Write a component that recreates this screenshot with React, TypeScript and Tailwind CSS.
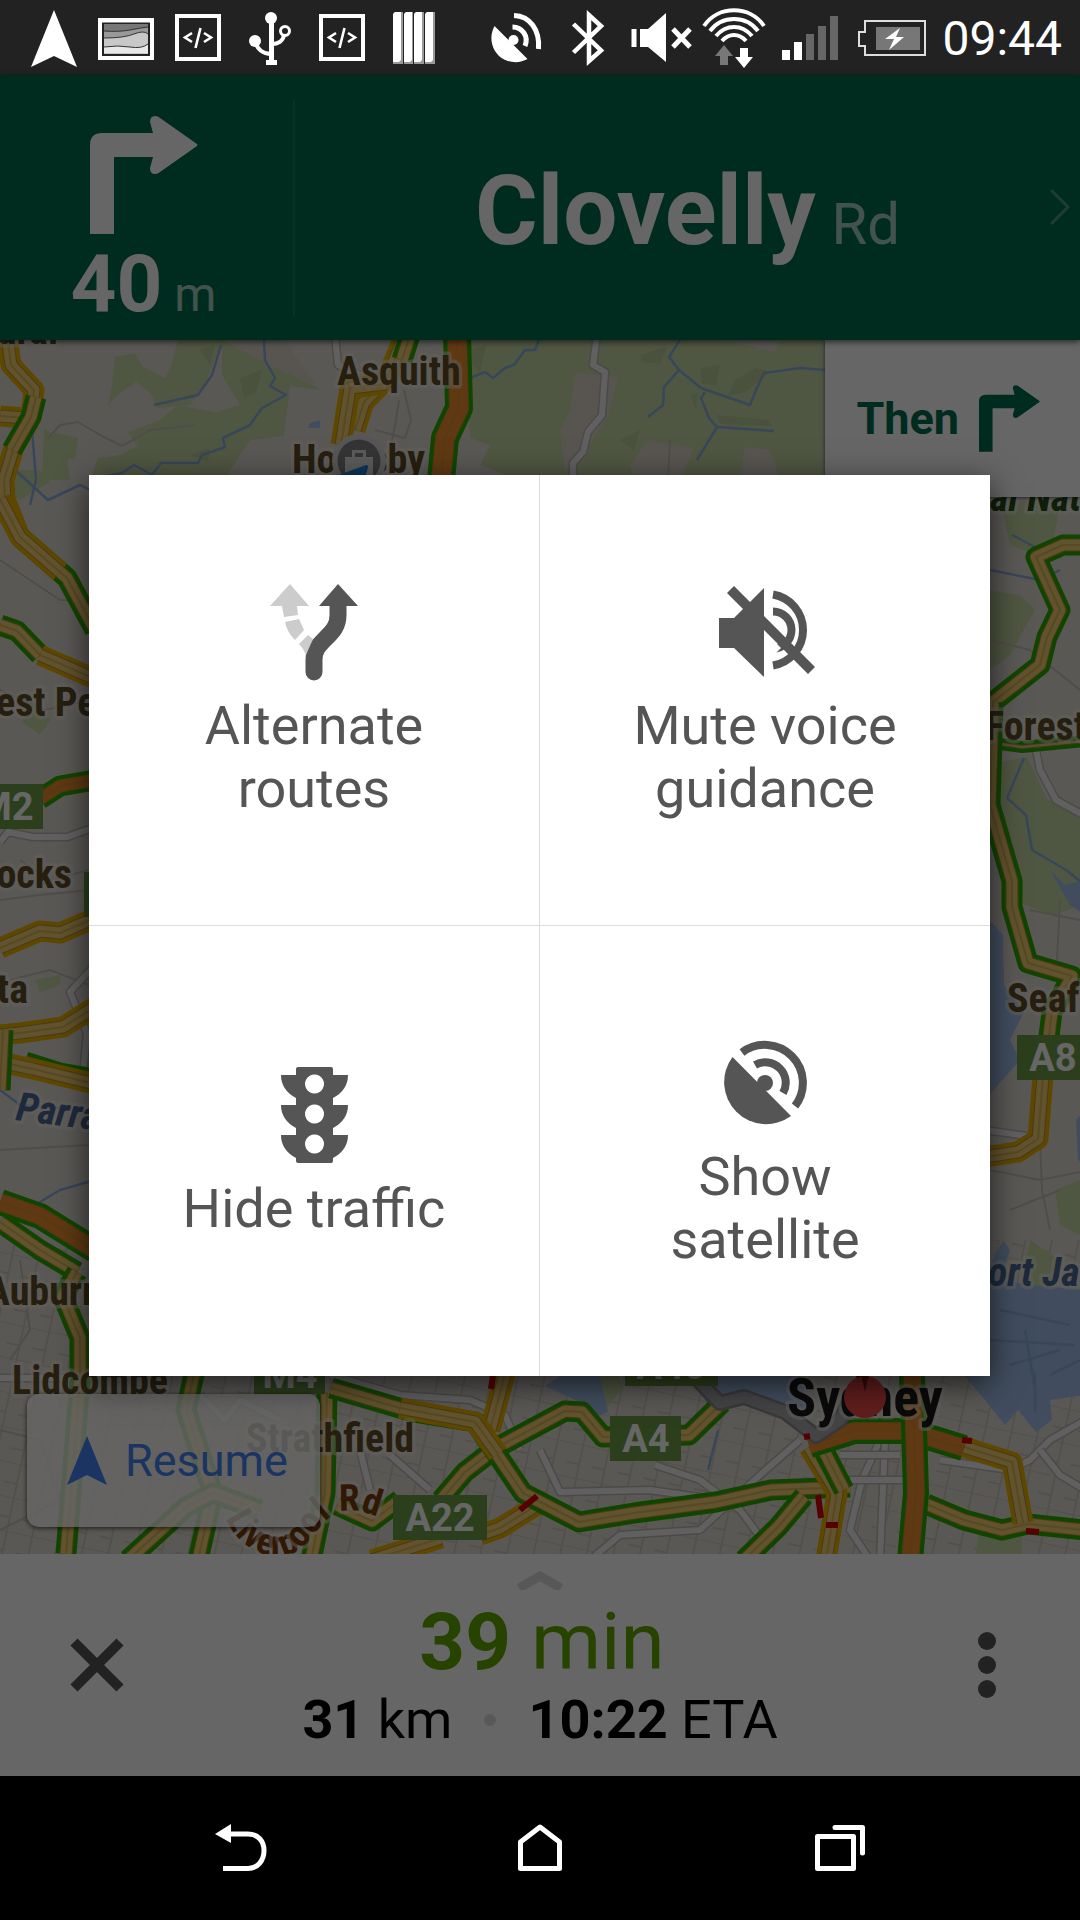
import type { ReactNode } from "react";

interface Road {
  points: string;
  traffic: string;
  core: string;
  width?: number;
}

const GREEN = "#2aac00";
const AMBER = "#ecb400";
const YELLOW = "#f2cf70";
const ORANGE = "#f08f2e";

const roads: Road[] = [
  { points: "7,335 11,365 34,390 31,417 14,447 4,480 5,499 20,537", traffic: AMBER, core: YELLOW },
  { points: "0,416 24,418", traffic: AMBER, core: YELLOW },
  { points: "36,397 31,417 12,450", traffic: GREEN, core: YELLOW },
  { points: "20,537 67,578 95,630", traffic: GREEN, core: YELLOW },
  { points: "0,499 20,537 60,572", traffic: AMBER, core: YELLOW },
  { points: "0,625 17,631 40,655", traffic: GREEN, core: YELLOW },
  { points: "40,655 95,679", traffic: AMBER, core: YELLOW },
  { points: "40,799 60,786 95,780", traffic: GREEN, core: ORANGE },
  { points: "0,948 40,931 60,933 95,918", traffic: AMBER, core: YELLOW },
  { points: "0,1035 20,1033 63,1027 95,1007", traffic: AMBER, core: YELLOW },
  { points: "25,1062 60,1073 95,1079", traffic: GREEN, core: YELLOW },
  { points: "0,1062 33,1069 95,1084", traffic: AMBER, core: YELLOW },
  { points: "0,1090 3,1030", traffic: GREEN, core: YELLOW },
  { points: "0,1222 40,1250 77,1272", traffic: GREEN, core: YELLOW },
  { points: "0,1202 40,1216 95,1250", traffic: GREEN, core: ORANGE, width: 26 },
  { points: "77,1272 63,1297 80,1338 80,1380 66,1554", traffic: GREEN, core: YELLOW },
  { points: "405,335 386,380 364,402 355,430", traffic: AMBER, core: YELLOW },
  { points: "410,335 402,360", traffic: GREEN, core: YELLOW },
  { points: "386,384 350,388 341,445", traffic: AMBER, core: YELLOW },
  { points: "457,335 459,408 445,438 441,480", traffic: GREEN, core: ORANGE, width: 28 },
  { points: "1085,545 1063,545 1036,557 1060,610 1047,637 1040,665 993,702", traffic: GREEN, core: YELLOW },
  { points: "993,743 1022,747 1085,741", traffic: GREEN, core: "#f4e6b8", width: 12 },
  { points: "993,702 990,805 1012,881 1012,907 1028,963 1072,976 1052,1012 1045,1068", traffic: GREEN, core: YELLOW },
  { points: "1044,1064 1038,1139 1018,1152 985,1157", traffic: AMBER, core: YELLOW },
  { points: "195,1370 186,1410 213,1493 198,1560", traffic: GREEN, core: YELLOW },
  { points: "128,1560 186,1507 213,1493 260,1510", traffic: GREEN, core: YELLOW },
  { points: "327,1392 325,1493 311,1560", traffic: GREEN, core: YELLOW },
  { points: "372,1560 441,1538", traffic: AMBER, core: YELLOW },
  { points: "337,1505 372,1521 400,1500", traffic: GREEN, core: YELLOW },
  { points: "506,1370 490,1430", traffic: AMBER, core: YELLOW },
  { points: "480,1535 500,1528 537,1505", traffic: AMBER, core: YELLOW },
  { points: "441,1500 465,1472 496,1448 565,1411 582,1412 603,1437 689,1435 722,1403", traffic: GREEN, core: YELLOW },
  { points: "331,1388 413,1412 475,1422 492,1447 523,1493 579,1522 634,1513 716,1502 771,1490 850,1487", traffic: GREEN, core: YELLOW },
  { points: "400,1408 475,1422 498,1454", traffic: AMBER, core: YELLOW },
  { points: "809,1447 837,1493 826,1560", traffic: AMBER, core: YELLOW },
  { points: "822,1447 844,1490", traffic: GREEN, core: YELLOW },
  { points: "804,1496 778,1527 744,1560", traffic: GREEN, core: YELLOW },
  { points: "926,1504 964,1520 1002,1530 1028,1524 1085,1530", traffic: GREEN, core: YELLOW },
  { points: "964,1447 1012,1462 1023,1523", traffic: AMBER, core: YELLOW },
  { points: "809,1445 854,1431 909,1431 964,1448", traffic: GREEN, core: ORANGE, width: 26 },
  { points: "912,1375 914,1427 916,1493 910,1560", traffic: GREEN, core: ORANGE, width: 26 },
];

const whiteRoads = [
  "597,335 593,365 605,372 602,415 588,432 583,452 573,463 573,480",
  "335,335 338,365 360,375",
  "0,842 8,832 33,837 67,837 95,827",
  "95,965 70,992 87,1033 83,1075",
  "1036,750 1040,770 1056,800 1085,816",
  "330,1375 400,1395 470,1400 505,1415 520,1450",
  "540,1450 560,1492 650,1490 720,1500",
  "655,1465 700,1480 740,1510 770,1550",
  "800,1440 760,1475 700,1530 620,1535 590,1560",
  "880,1440 862,1480 850,1530 870,1560",
  "885,1440 880,1560",
  "840,1455 900,1455",
  "850,1480 920,1480",
  "1085,1420 1050,1440 1030,1460 1010,1470 940,1460",
  "1040,1450 1060,1475 1085,1490",
  "200,1395 225,1420 240,1400 280,1420",
  "360,1450 370,1490",
  "390,1455 430,1490",
  "985,1130 1040,1138",
  "0,1378 90,1378",
];

const parks = [
  "115,357 135,353 143,367 165,378 171,366 178,340 222,340 205,385 190,405 158,408 150,393 136,382 118,395 108,405 112,385",
  "178,405 215,412 228,421 200,438 180,452 140,450 128,432 160,420",
  "222,340 270,340 320,390 290,386 284,436 250,440 240,455 225,480 90,480 98,458 120,455 150,440 190,420 240,405 222,375",
  "53,432 78,438 75,460 50,455",
  "462,340 825,340 825,480 520,480 480,465 490,445 470,438 468,400",
  "0,470 40,470 50,482 20,500 0,490",
  "44,428 66,445 70,480 42,480",
  "990,590 1020,595 1035,610 1010,655 990,670",
  "1000,500 1060,505 1050,560 1010,545",
  "995,763 1027,757 1047,799 1085,816 1085,904 1053,915 1023,904 995,845",
  "500,1455 520,1460 510,1480 495,1475",
  "610,1365 625,1385 605,1410 600,1375",
  "980,1525 1022,1525 1022,1560 975,1560",
  "1055,1190 1080,1180 1080,1235 1060,1225",
  "1030,1240 1060,1260 1040,1310 1020,1290",
  "30,700 50,720 40,735 22,722",
  "35,980 60,975 60,985 40,992",
];

const woods = [
  "470,350 486,345 480,372 470,362",
  "640,355 668,346 660,364 642,362",
  "700,368 720,365 716,385 702,384",
  "735,380 756,368 770,372 746,392 728,396",
  "716,415 768,420 772,426 720,424",
  "690,395 698,393 696,410",
  "620,440 640,430 634,450",
  "240,378 262,370 256,392 244,398",
  "200,350 215,345 210,365",
  "190,455 210,448 208,462",
];

const clearings = [
  "575,373 618,377 608,415 590,445 565,470 560,430 570,410",
  "648,440 694,448 680,480 635,480 630,465",
  "745,447 770,450 780,480 740,480",
  "222,340 285,340 318,388 270,365",
  "720,340 780,340 775,352 745,345",
];

const water = [
  "985,915 1003,935 1004,985 1024,1012 1010,1040 1020,1060 985,1100",
  "985,1275 1003,1240 1010,1250 1000,1280 1030,1285 1085,1290 1085,1395 1050,1400 1052,1420 1036,1432 1018,1410 1005,1425 985,1400 960,1370 985,1370",
  "560,1376 600,1376 608,1412 588,1420 575,1400 545,1386",
  "650,1376 800,1376 810,1410 770,1400 730,1395 712,1425 700,1380",
  "1050,870 1065,885 1085,880 1085,915 1070,905",
  "1076,1120 1085,1110 1085,1165 1078,1160",
  "310,423 320,420 320,428 308,428",
];

const creeks = [
  "221,345 212,375 198,395 154,405",
  "264,340 265,360 275,378 270,386 286,395 262,408 250,425 223,438 225,447 202,455 198,463 161,463 152,475 134,465 122,473 95,478",
  "539,340 535,350 525,350 514,365 505,368 493,378 485,372 470,378",
  "680,340 669,357 679,370 701,388 750,405 756,390 764,373 800,368 825,370",
  "679,370 664,387 663,405 648,417",
  "705,392 701,398 709,418 717,427 697,460",
  "717,427 774,431",
  "15,470 48,500 80,485 90,490",
  "32,430 36,480 30,505",
  "1012,535 1037,548",
  "990,570 1040,580 1060,570",
  "1024,758 1007,798 1026,815 1032,850 1066,870 1085,885",
  "95,1180 60,1190 35,1205",
  "0,1090 20,1105 60,1108 95,1112",
  "718,1430 708,1470",
];

const lanes = [
  "48,438 60,425 78,422 100,435 122,446 150,430 170,428 195,425",
  "399,400 396,420 392,440 390,475",
  "404,390 411,420 405,438 375,430",
  "670,440 668,480",
  "0,560 30,580 60,600 89,600",
  "0,690 45,710 89,700",
  "20,860 50,880 89,870",
  "0,900 40,895 89,890",
  "10,980 50,970 89,985",
  "0,1150 89,1145",
  "20,1260 30,1330 10,1360",
  "990,640 1030,650 1080,690",
  "1030,910 1080,920",
  "1060,900 1057,960",
  "990,1170 1040,1180 1080,1172",
  "1010,1210 1060,1190",
  "1040,1140 1042,1190 1050,1230",
  "0,1430 40,1440 60,1500 0,1530",
];

const jams = [
  "520,1510 537,1496",
  "818,1495 821,1518",
  "826,1525 838,1525",
  "962,1440 972,1441",
  "1026,1531 1039,1532",
  "493,1376 491,1389",
  "804,1437 810,1436",
];

function MapDrawing() {
  return (
    <svg
      className="absolute inset-0 size-full"
      viewBox="0 340 1080 1214"
      preserveAspectRatio="xMidYMid slice"
      fill="none"
      strokeLinejoin="round"
      aria-hidden="true"
    >
      <defs>
        <pattern id="streets" width="26" height="34" patternUnits="userSpaceOnUse" patternTransform="rotate(12)">
          <path d="M0 0H26M13 0V34M0 20H13" stroke="#cfc9bf" strokeWidth="2" />
        </pattern>
        <path id="liverpool-road" d="M226 1518C242 1558 286 1566 306 1544S334 1492 396 1526" />
      </defs>
      <rect y="340" width="1080" height="1214" fill="#e2dcd4" />
      <rect y="1240" width="1080" height="314" fill="url(#streets)" />
      {parks.map((points) => (
        <polygon key={points} points={points} fill="#c6d7a4" />
      ))}
      {woods.map((points) => (
        <polygon key={points} points={points} fill="#b9ca96" />
      ))}
      {clearings.map((points) => (
        <polygon key={points} points={points} fill="#dcd5cb" />
      ))}
      {water.map((points) => (
        <polygon key={points} points={points} fill="#a3c0ec" />
      ))}
      <g stroke="#8db0e0" strokeWidth="2.5">
        {creeks.map((points) => (
          <polyline key={points} points={points} />
        ))}
        <path d="M1000 1310L1070 1325M990 1340L1075 1345M1010 1365L1060 1350M1025 1330L1035 1390M1050 1375L1080 1360M1035 1372V1412" />
      </g>
      <g stroke="#c6c0b6" strokeWidth="2">
        {lanes.map((points) => (
          <polyline key={points} points={points} />
        ))}
      </g>
      {whiteRoads.map((points) => (
        <g key={points}>
          <polyline points={points} stroke="#bdb8b0" strokeWidth="9" />
          <polyline points={points} stroke="#f0f0f0" strokeWidth="6" />
        </g>
      ))}
      {roads.map(({ points, traffic, core, width = 21 }) => (
        <g key={points}>
          <polyline points={points} stroke={traffic} strokeWidth={width} />
          <polyline points={points} stroke="#b98f3c" strokeWidth={width - 8} />
          <polyline points={points} stroke={core} strokeWidth={width - 10} />
          <polyline points={points} stroke="#b98f3c" strokeOpacity="0.4" strokeWidth="2" />
        </g>
      ))}
      <polyline points="690,1372 720,1403 744,1397 785,1412 816,1436 840,1420 850,1400" stroke="#8c8c90" strokeWidth="16" />
      <polyline points="690,1372 720,1403 744,1397 785,1412 816,1436 840,1420 850,1400" stroke="#aaaaae" strokeWidth="11" />
      {jams.map((points) => (
        <polyline key={points} points={points} stroke="#d8000c" strokeWidth="6" />
      ))}

      <g fill="#6f9e46">
        <rect x="-10" y="784" width="53" height="45" />
        <rect x="84" y="872" width="20" height="45" />
        <rect x="1017" y="1035" width="80" height="45" />
        <rect x="254" y="1350" width="71" height="44" />
        <rect x="625" y="1342" width="93" height="44" />
        <rect x="610" y="1416" width="71" height="45" />
        <rect x="393" y="1495" width="94" height="45" />
      </g>
      <g fill="#fff" textAnchor="middle" className="font-['Roboto'] text-[38px] font-bold">
        <text x="6" y="820">M2</text>
        <text x="1053" y="1071">A8</text>
        <text x="290" y="1388">M4</text>
        <text x="671" y="1379">A40</text>
        <text x="646" y="1452">A4</text>
        <text x="440" y="1531">A22</text>
      </g>
      <g
        fill="#5f4f2a"
        stroke="#f2efe9"
        strokeOpacity="0.5"
        strokeWidth="7"
        paintOrder="stroke"
        className="font-['Roboto_Condensed','Liberation_Sans_Narrow','Roboto',sans-serif] text-[40px] font-bold"
      >
        <text x="58" y="344" textAnchor="end">Dural</text>
        <text x="337" y="385">Asquith</text>
        <text x="292" y="473">Hornsby</text>
        <text x="-4" y="716">est Pennant</text>
        <text x="72" y="888" textAnchor="end">The Rocks</text>
        <text x="28" y="1003" textAnchor="end">Parramatta</text>
        <text x="-14" y="1305">Auburn</text>
        <text x="12" y="1394">Lidcombe</text>
        <text x="246" y="1452">Strathfield</text>
        <text x="985" y="740">Forestville</text>
        <text x="1007" y="1012">Seaforth</text>
        <text className="text-[37px]" fill="#7a3c0c">
          <textPath href="#liverpool-road">Liverpool Rd</textPath>
        </text>
        <text x="787" y="1416" fill="#1a1a1a" className="text-[54px]">Sydney</text>
        <g className="italic">
          <text x="990" y="511" fill="#24501a">al National</text>
          <text x="988" y="1286" fill="#4b6996">ort Jackson</text>
          <text x="15" y="1120" fill="#4b6996" transform="rotate(7 15 1120)">Parramatta</text>
        </g>
      </g>

      <circle cx="359" cy="461" r="27" fill="#d8d8d8" />
      <circle cx="359" cy="461" r="21.5" fill="#828282" />
      <path d="M345 457h7v-7h14v7h7v20h-28zM355 457h8v-4h-8z" fill="#e4e4e4" fillRule="evenodd" />
      <path d="M336 476L366 465Q369 465 368 468L364 480Z" fill="#1e88e5" />
      <circle cx="865" cy="1397" r="21" fill="#f04c46" />
      <path d="M861 1374h8l-4 18z" fill="#8a1c18" />
    </svg>
  );
}

function StatusIcon({ children }: { children: ReactNode }) {
  return (
    <svg className="h-[75px] w-[72px] shrink-0" viewBox="0 0 72 75" fill="none" stroke="none" aria-hidden="true">
      {children}
    </svg>
  );
}

function DevIcon() {
  return (
    <StatusIcon>
      <rect x="15" y="16" width="42" height="43" stroke="#fff" strokeWidth="4" />
      <path d="M30 33L23 37.5L30 42M42 33L49 37.5L42 42M38.5 28L33.5 48" stroke="#fff" strokeWidth="2.6" />
    </StatusIcon>
  );
}

function StatusBar() {
  return (
    <div className="flex h-[75px] items-center bg-[#222222] px-[18px] text-white">
      <StatusIcon>
        <path d="M36 10L59 67L36 56L13 67Z" fill="#fff" />
      </StatusIcon>
      <StatusIcon>
        <path d="M8 18H64V60H8ZM12 22.500V56H60V22.500Z" fill="#fff" fillRule="evenodd" />
        <path d="M14 24H58V54H14Z" fill="#777" />
        <path d="M14 31Q30 32 40 30T58 27V54H14Z" fill="#999" />
        <path d="M14 38Q34 38 44 34T58 34V54H14Z" fill="#c8c8c8" />
        <path d="M14 47Q28 45 40 47T58 44V53H14Z" fill="#e8e8e8" />
        <path d="M14 31Q30 32 40 30T58 27M14 38Q34 38 44 34T58 34M14 47Q28 45 40 47T58 44" stroke="#333" strokeWidth="1" />
      </StatusIcon>
      <DevIcon />
      <StatusIcon>
        <circle cx="37" cy="18" r="6" fill="#fff" />
        <circle cx="21" cy="41" r="6" fill="#fff" />
        <circle cx="51" cy="31" r="4.500" stroke="#fff" strokeWidth="3" />
        <path d="M37 18V64M22 43C23 49 29 54 37 54M50 35C49 41 44 44 38 44" stroke="#fff" strokeWidth="4" />
        <path d="M35 18h5v42h3v5H32v-5h3z" fill="#fff" />
      </StatusIcon>
      <DevIcon />
      <StatusIcon>
        <path d="M15 14L17 12H25V64H15Z M26 14L28 12H35V64H26Z M36 14L38 12H46V64H36Z M47 14L49 12H57V64H47Z" fill="#999" />
        <path d="M15 14L17 12H23V60L21 62H15Z M26 14L28 12H34V60L32 62H26Z M36 14L38 12H44V60L42 62H36Z M47 14L49 12H55V60L53 62H47Z" fill="#fff" />
      </StatusIcon>

      <div className="ml-auto flex items-center">
        <StatusIcon>
          <path d="M14.500 26L47.500 59C39 64 27 63 19 56C11 48 9 36 14.500 26Z" fill="#fff" />
          <circle cx="33.500" cy="40" r="5" fill="#fff" />
          <path d="M34 15.500C50 16 60 30 58.500 49M32.500 27C42 27 49 36 45 46" stroke="#fff" strokeWidth="5" />
        </StatusIcon>
        <StatusIcon>
          <path d="M21.500 24L49 50.500L37 61V15L49 26L21.500 52.500" stroke="#fff" strokeWidth="4.500" />
        </StatusIcon>
        <StatusIcon>
          <path d="M7.500 29h5v18h-5zM16 29h8L42 13v49L24 47h-8z" fill="#fff" />
          <path d="M49 29L66 47M66 29L49 47" stroke="#fff" strokeWidth="5" />
        </StatusIcon>
        <StatusIcon>
          <g stroke="#fff" strokeWidth="4">
            <path d="M8 26C22 5 54 5 68 26M14 31C26 15 50 15 62 31M20 36C30 24 46 24 56 36M26 41C33 33 43 33 50 41" />
          </g>
          <path d="M28 45L37 56H32V65H24V56H19Z" fill="#777" />
          <path d="M44 48H52V57H57L48 68L39 57H44Z" fill="#fff" />
        </StatusIcon>
        <svg className="ml-[14px] h-11 w-14" viewBox="0 0 56 44" aria-hidden="true">
          <path d="M0 34h8v10H0zM12 26h8v18h-8z" fill="#fff" />
          <path d="M24 18h8v26h-8zM36 10h8v34h-8zM48 0h8v44h-8z" fill="#666" />
        </svg>
        <svg className="ml-5 h-9 w-[68px]" viewBox="0 0 68 36" fill="none" aria-hidden="true">
          <path d="M7 1H67V35H7V26H1V12H7Z" stroke="#ddd" strokeWidth="2" />
          <path d="M18 7H62V30H18Z" fill="#777" />
          <path d="M42 8L27 19H36L31 30L46 17H38Z" fill="#fff" />
        </svg>
        <span className="ml-4 pt-0.5 text-5xl leading-none">09:44</span>
      </div>
    </div>
  );
}

function TurnRightArrow({ className }: { className: string }) {
  return (
    <svg className={className} viewBox="0 0 108 118" fill="currentColor" aria-hidden="true">
      <path d="M0 118V29Q0 17 12 17H63L60 6Q60 0 65 0Q68 0 70 2L107 28Q108 29 107 30L70 56Q68 58 65 58Q60 58 60 52L63 41H24V118Z" />
    </svg>
  );
}

function DirectionHeader() {
  return (
    <header className="relative z-10 flex h-[265px] bg-[#006c4e] text-white shadow-[0_2px_6px_rgba(0,0,0,0.6)]">
      <div className="flex w-[293px] flex-col items-center pr-1.5 pt-[41px]">
        <TurnRightArrow className="h-[118px] w-[108px]" />
        <p className="mt-2.5 flex items-baseline gap-3 text-[80px] font-bold leading-none">
          40 <span className="text-5xl font-normal leading-none text-white/65">m</span>
        </p>
      </div>
      <div className="mb-6 mt-6 w-0.5 bg-white/10" />
      <h1 className="flex flex-1 items-baseline justify-center gap-4 self-center pt-1.5 text-8xl font-bold leading-none">
        Clovelly <span className="text-[58px] font-normal leading-none text-white/65">Rd</span>
      </h1>
      <button className="absolute right-2.5 top-[114px]" aria-label="Next step">
        <svg className="h-9 w-5" viewBox="0 0 20 36" fill="none" stroke="#fff" strokeOpacity="0.3" strokeWidth="3" strokeLinecap="round">
          <path d="M2 2L18 18L2 34" />
        </svg>
      </button>
    </header>
  );
}

const tiles = [
  {
    label: "Alternate routes",
    icon: (
      <>
        <path d="M78 4L98 26H59Z" />
        <path d="M78 24V35C78 46 73 51 66 58C58 66 54 70 54 80V92" fill="none" stroke="#555" strokeWidth="17" strokeLinecap="round" />
        <path d="M30 4L49 26H37L38 35L24 37L22 26H10ZM25 42L39 39L44 50L35 60Q27 52 25 42ZM39 64L48 55L53 59L46 75Q44 69 39 64Z" fill="#ccc" />
      </>
    ),
  },
  {
    label: "Mute voice guidance",
    icon: (
      <>
        <path d="M8 38H23L53 8V97L23 68H8Z" />
        <path d="M62 14.500A36 36 0 0 1 62 85.500M62 31.500A18.500 18.500 0 0 1 62 68.500" fill="none" stroke="#555" strokeWidth="8" />
        <path d="M53 51L70 68L62 76L53 66Z" fill="#fff" />
        <path d="M16 13L23 6L104 87L97 94Z" />
      </>
    ),
  },
  {
    label: "Hide traffic",
    icon: (
      <path
        fillRule="evenodd"
        d="M38 4H71Q73 4 73 6V12H88Q88 27 73 35V42H88Q88 57 73 65V72H88Q88 87 73 95V98Q73 100 71 100H38Q36 100 36 98V95Q21 87 21 72H36V65Q21 57 21 42H36V35Q21 27 21 12H36V6Q36 4 38 4ZM54.500 11.500a9.500 9.500 0 1 0 .01 0ZM54.500 41.500a9.500 9.500 0 1 0 .01 0ZM54.500 71.500a9.500 9.500 0 1 0 .01 0Z"
      />
    ),
  },
  {
    label: "Show satellite",
    icon: (
      <>
        <path d="M21.500 26L80 85A42 42 0 0 1 21.500 26Z" />
        <circle cx="54" cy="52" r="8" />
        <path d="M31 21.500A38 38 0 0 1 84 75M44 34A20.500 20.500 0 0 1 72 62" fill="none" stroke="#555" strokeWidth="8" />
      </>
    ),
  },
];

function OptionsDialog() {
  return (
    <div
      role="dialog"
      aria-label="Navigation options"
      className="grid aspect-square w-full grid-cols-2 grid-rows-2 gap-px bg-[#dcdcdc] shadow-[0_8px_30px_rgba(0,0,0,0.65)]"
    >
      {tiles.map((tile) => (
        <button
          key={tile.label}
          className="flex flex-col items-center justify-center gap-1.5 bg-white px-20 text-[54px] leading-[63px] text-[#555555]"
        >
          <svg className="size-[108px]" viewBox="0 0 108 108" fill="#555" aria-hidden="true">
            {tile.icon}
          </svg>
          {tile.label}
        </button>
      ))}
    </div>
  );
}

function TripSummary() {
  return (
    <footer className="grid h-[222px] grid-cols-[1fr_auto_1fr] items-center bg-white text-black">
      <button className="ml-[70px] justify-self-start" aria-label="Exit navigation">
        <svg className="size-[54px]" viewBox="0 0 54 54" stroke="#555" strokeWidth="10">
          <path d="M4 4L50 50M50 4L4 50" />
        </svg>
      </button>
      <div className="flex flex-col items-center self-start pt-4">
        <svg className="h-5 w-[46px]" viewBox="0 0 46 20" fill="none" stroke="#dcdcdc" strokeWidth="9" aria-hidden="true">
          <path d="M2 18L23 6L44 18" />
        </svg>
        <p className="mt-3 pl-1 text-[80px] leading-none text-[#62a800]">
          <b>39</b> min
        </p>
        <div className="mt-1.5 flex items-center gap-8 text-[54px] leading-[64px]">
          <p>
            <b>31</b> km
          </p>
          <span className="size-3 rounded-full bg-[#dcdcdc]" />
          <p>
            <b>10:22</b> ETA
          </p>
        </div>
      </div>
      <button className="mr-[84px] flex flex-col gap-1.5 justify-self-end" aria-label="More options">
        <span className="size-[18px] rounded-full bg-[#555555]" />
        <span className="size-[18px] rounded-full bg-[#555555]" />
        <span className="size-[18px] rounded-full bg-[#555555]" />
      </button>
    </footer>
  );
}

function SystemNav() {
  return (
    <nav className="grid h-36 grid-cols-3 place-items-center bg-black px-[91px] text-white">
      <button aria-label="Back">
        <svg className="size-[54px]" viewBox="0 0 54 54" fill="none" stroke="currentColor" strokeWidth="5">
          <path d="M14 13H34C44 13 50 20 50 29.500S44 47.500 34 47.500H9" />
          <path d="M1 13L17 3V22Z" fill="currentColor" stroke="none" />
        </svg>
      </button>
      <button aria-label="Home">
        <svg className="size-[54px]" viewBox="0 0 54 54" fill="none" stroke="currentColor" strokeWidth="5" strokeLinejoin="round">
          <path d="M7.500 47.500V21L27 6L46.500 21V47.500Z" />
        </svg>
      </button>
      <button aria-label="Recent apps">
        <svg className="size-[54px]" viewBox="0 0 54 54" fill="none" stroke="currentColor" strokeWidth="5" strokeLinejoin="round" strokeLinecap="round">
          <path d="M5.500 15.500H41.500V47.500H5.500ZM23 6.500H50.500V32" />
        </svg>
      </button>
    </nav>
  );
}

function App() {
  return (
    <div className="flex min-h-screen flex-col bg-black font-['Roboto',sans-serif]">
      <StatusBar />
      <div className="relative flex flex-1 flex-col">
        <DirectionHeader />
        <main className="relative flex-1 overflow-hidden">
          <MapDrawing />
          <div className="absolute right-0 top-0 flex h-[157px] items-center gap-5 bg-white pl-[31px] pr-10 text-[#006c4e] shadow-[0_1px_4px_rgba(0,0,0,0.6)]">
            <span className="text-[45px] font-bold leading-none">Then</span>
            <TurnRightArrow className="h-[67px] w-[61px]" />
          </div>
          <button className="absolute bottom-[27px] left-[27px] flex h-[133px] items-center gap-[18px] rounded-xl bg-white/80 pl-10 pr-8 text-[45px] leading-none text-[#4285f4] shadow-[0_1px_5px_rgba(0,0,0,0.7)]">
            <svg className="h-[49px] w-10" viewBox="0 0 40 49" fill="currentColor" aria-hidden="true">
              <path d="M20 0L40 49L20 39L0 49Z" />
            </svg>
            Resume
          </button>
        </main>
        <TripSummary />
        <div className="absolute inset-0 z-20 flex items-center justify-center bg-black/60 pl-[89px] pr-[90px]">
          <OptionsDialog />
        </div>
      </div>
      <SystemNav />
    </div>
  );
}

export default App;
